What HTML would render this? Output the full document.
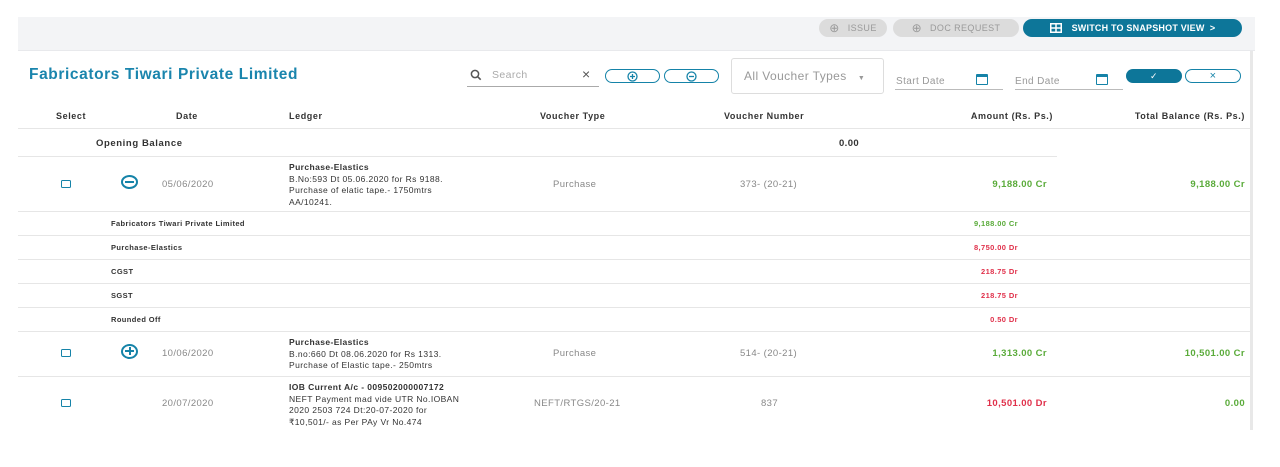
<!DOCTYPE html>
<html><head><meta charset="utf-8"><style>
*{box-sizing:border-box;margin:0;padding:0}
body{width:1280px;height:467px;background:#fff;font-family:"Liberation Sans",sans-serif;position:relative;overflow:hidden;color:#333;letter-spacing:0.4px}
.a{position:absolute;white-space:nowrap}
.r{text-align:right}
.top{left:18px;top:17px;width:1237px;height:34px;background:#f3f4f6;border-bottom:1px solid #e8e9ec}
.pill{position:absolute;height:18px;border-radius:9px;font-size:9px;display:flex;align-items:center;justify-content:center;gap:8px}
.g{background:#dcdcdc;color:#9a9a9a}
.hl{height:1px;background:#e6e6e6;position:absolute}
.hd{font-size:9px;font-weight:bold;color:#333;top:111px;letter-spacing:0.6px}
.sub{font-size:7.5px;font-weight:bold;color:#333}
.gr{color:#5aab3a;font-weight:bold}
.rd{color:#e0304a;font-weight:bold}
.led{font-size:8.5px;line-height:11.5px;color:#333}
.dt{font-size:9.5px;color:#888}
.chk{position:absolute;width:10px;height:8px;border:1.5px solid #1583a8;border-radius:1.5px}
.ob{position:absolute;height:14px;border:1px solid #1583a8;border-radius:7px;display:flex;align-items:center;justify-content:center}
</style></head><body>
<div class="a top"></div>
<div class="pill g" style="left:819px;top:19px;width:68px"><span style="font-size:12px">⊕</span>ISSUE</div>
<div class="pill g" style="left:893px;top:19px;width:126px"><span style="font-size:12px">⊕</span>DOC REQUEST</div>
<div class="pill" style="left:1023px;top:19px;width:219px;background:#0d7699;color:#fff;font-weight:bold;gap:10px;letter-spacing:0.2px">
<svg width="12" height="10" viewBox="0 0 12 10"><rect x="0.75" y="0.75" width="10.5" height="8.5" fill="none" stroke="#fff" stroke-width="1.5"/><path d="M6 1v8M1 5h10" stroke="#fff" stroke-width="1.5"/></svg>SWITCH TO SNAPSHOT VIEW&nbsp;&nbsp;&gt;</div>
<div class="a" style="left:1250px;top:51px;width:3px;height:379px;background:#e8e8e8"></div>

<div class="a" style="left:29px;top:66px;font-size:15.5px;font-weight:bold;color:#1a85ad;letter-spacing:0.6px">Fabricators Tiwari Private Limited</div>
<svg class="a" style="left:470px;top:69px" width="12" height="12" viewBox="0 0 12 12"><circle cx="5" cy="5" r="3.6" fill="none" stroke="#555" stroke-width="1.5"/><path d="M7.7 7.7l3 3" stroke="#555" stroke-width="1.6"/></svg>
<div class="a" style="left:492px;top:69px;font-size:10.5px;color:#aaa">Search</div>
<div class="a" style="left:582px;top:66px;font-size:14px;color:#555">×</div>
<div class="hl" style="left:467px;top:86px;width:132px;background:#aaa"></div>
<div class="ob" style="left:605px;top:69px;width:55px"><svg width="11" height="11" viewBox="0 0 11 11"><circle cx="5.5" cy="5.5" r="4.5" fill="none" stroke="#1583a8" stroke-width="1.3"/><path d="M3 5.5h5M5.5 3v5" stroke="#1583a8" stroke-width="1.3"/></svg></div>
<div class="ob" style="left:664px;top:69px;width:55px"><svg width="11" height="11" viewBox="0 0 11 11"><circle cx="5.5" cy="5.5" r="4.5" fill="none" stroke="#1583a8" stroke-width="1.3"/><path d="M3 5.5h5" stroke="#1583a8" stroke-width="1.3"/></svg></div>
<div class="a" style="left:731px;top:58px;width:153px;height:36px;border:1px solid #ddd;border-radius:3px"></div>
<div class="a" style="left:744px;top:69px;font-size:12px;color:#999">All Voucher Types&nbsp;&nbsp; <span style="font-size:7px">▼</span></div>
<div class="a" style="left:896px;top:76px;font-size:10px;color:#999">Start Date</div>
<div class="a" style="left:976px;top:74px;width:12px;height:11px;border:1.5px solid #1583a8;border-top-width:3px;border-radius:1px"></div>
<div class="hl" style="left:895px;top:89px;width:108px;background:#bbb"></div>
<div class="a" style="left:1015px;top:76px;font-size:10px;color:#999">End Date</div>
<div class="a" style="left:1096px;top:74px;width:12px;height:11px;border:1.5px solid #1583a8;border-top-width:3px;border-radius:1px"></div>
<div class="hl" style="left:1015px;top:89px;width:108px;background:#bbb"></div>
<div class="a" style="left:1126px;top:69px;width:56px;height:14px;border-radius:7px;background:#0d7699;color:#fff;font-size:9px;text-align:center;line-height:14px">✓</div>
<div class="a" style="left:1185px;top:69px;width:56px;height:14px;border-radius:7px;border:1px solid #1583a8;color:#1583a8;font-size:11px;text-align:center;line-height:12px">×</div>

<div class="a hd" style="left:56px">Select</div>
<div class="a hd" style="left:176px">Date</div>
<div class="a hd" style="left:289px">Ledger</div>
<div class="a hd" style="left:540px">Voucher Type</div>
<div class="a hd" style="left:724px">Voucher Number</div>
<div class="a hd r" style="right:227px">Amount (Rs. Ps.)</div>
<div class="a hd r" style="right:35px">Total Balance (Rs. Ps.)</div>
<div class="hl" style="left:18px;top:128px;width:1232px"></div>
<div class="a" style="left:96px;top:138px;font-size:9.5px;font-weight:bold;letter-spacing:0.6px">Opening Balance</div>
<div class="a" style="left:839px;top:138px;font-size:9.5px;font-weight:bold">0.00</div>
<div class="hl" style="left:18px;top:156px;width:1039px"></div>

<div class="chk" style="left:61px;top:180px"></div>
<div class="a" style="left:121px;top:175px;width:17px;height:14px;border:2px solid #1583a8;border-radius:50%"></div><div class="a" style="left:125px;top:181px;width:9px;height:2px;background:#1583a8"></div>
<div class="a dt" style="left:162px;top:179px">05/06/2020</div>
<div class="a led" style="left:289px;top:162px"><b>Purchase-Elastics</b><br>B.No:593 Dt 05.06.2020 for Rs 9188.<br>Purchase of elatic tape.- 1750mtrs<br>AA/10241.</div>
<div class="a dt" style="left:553px;top:179px">Purchase</div>
<div class="a dt" style="left:740px;top:179px">373- (20-21)</div>
<div class="a gr r" style="right:233px;top:179px;font-size:9.5px">9,188.00 Cr</div>
<div class="a gr r" style="right:35px;top:179px;font-size:9.5px">9,188.00 Cr</div>
<div class="hl" style="left:18px;top:211px;width:1232px"></div>

<div class="a sub" style="left:111px;top:219px">Fabricators Tiwari Private Limited</div><div class="a sub gr r" style="right:262px;top:219px">9,188.00 Cr</div>
<div class="hl" style="left:18px;top:235px;width:1232px"></div>
<div class="a sub" style="left:111px;top:243px">Purchase-Elastics</div><div class="a sub rd r" style="right:262px;top:243px">8,750.00 Dr</div>
<div class="hl" style="left:18px;top:259px;width:1232px"></div>
<div class="a sub" style="left:111px;top:267px">CGST</div><div class="a sub rd r" style="right:262px;top:267px">218.75 Dr</div>
<div class="hl" style="left:18px;top:283px;width:1232px"></div>
<div class="a sub" style="left:111px;top:291px">SGST</div><div class="a sub rd r" style="right:262px;top:291px">218.75 Dr</div>
<div class="hl" style="left:18px;top:307px;width:1232px"></div>
<div class="a sub" style="left:111px;top:315px">Rounded Off</div><div class="a sub rd r" style="right:262px;top:315px">0.50 Dr</div>
<div class="hl" style="left:18px;top:331px;width:1232px"></div>

<div class="chk" style="left:61px;top:349px"></div>
<div class="a" style="left:121px;top:344px;width:17px;height:15px;border:2px solid #1583a8;border-radius:50%"></div><div class="a" style="left:125px;top:350px;width:9px;height:2px;background:#1583a8"></div><div class="a" style="left:128.5px;top:347px;width:2px;height:8px;background:#1583a8"></div>
<div class="a dt" style="left:162px;top:348px">10/06/2020</div>
<div class="a led" style="left:289px;top:337px"><b>Purchase-Elastics</b><br>B.no:660 Dt 08.06.2020 for Rs 1313.<br>Purchase of Elastic tape.- 250mtrs</div>
<div class="a dt" style="left:553px;top:348px">Purchase</div>
<div class="a dt" style="left:740px;top:348px">514- (20-21)</div>
<div class="a gr r" style="right:233px;top:348px;font-size:9.5px">1,313.00 Cr</div>
<div class="a gr r" style="right:35px;top:348px;font-size:9.5px">10,501.00 Cr</div>
<div class="hl" style="left:18px;top:376px;width:1232px"></div>

<div class="chk" style="left:61px;top:399px"></div>
<div class="a dt" style="left:162px;top:398px">20/07/2020</div>
<div class="a led" style="left:289px;top:382px"><b>IOB Current A/c - 009502000007172</b><br>NEFT Payment mad vide UTR No.IOBAN<br>2020 2503 724 Dt:20-07-2020 for<br>₹10,501/- as Per PAy Vr No.474</div>
<div class="a dt" style="left:534px;top:398px">NEFT/RTGS/20-21</div>
<div class="a dt" style="left:761px;top:398px">837</div>
<div class="a rd r" style="right:233px;top:398px;font-size:9.5px">10,501.00 Dr</div>
<div class="a gr r" style="right:35px;top:398px;font-size:9.5px">0.00</div>
</body></html>
